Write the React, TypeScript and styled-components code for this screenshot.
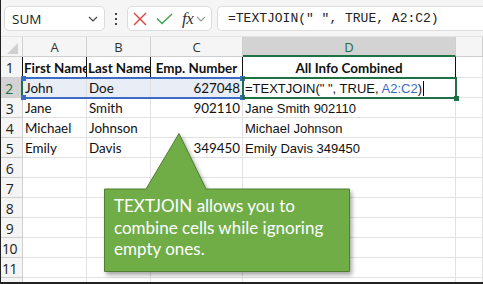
import React from "react";
import styled, { createGlobalStyle } from "styled-components";

const Global = createGlobalStyle`
  html, body { margin: 0; padding: 0; background: #ffffff; overflow: hidden; }
  * { box-sizing: border-box; }
`;

const Frame = styled.div`
  position: relative;
  width: 483px;
  height: 284px;
  overflow: hidden;
  background: #ffffff;
  border-left: 1px solid #222;
  border-bottom: 2px solid #222;
  display: flex;
  flex-direction: column;
`;

const Toolbar = styled.div`
  height: 37px;
  flex: none;
  background: #f5f5f5;
  border-bottom: 1px solid #e2e2e2;
  display: flex;
  align-items: flex-start;
  padding: 6px 0 0 3px;
`;

const BoxBase = styled.div`
  height: 25px;
  background: #ffffff;
  border: 1px solid #dcdcdc;
  border-radius: 5px;
  display: flex;
  align-items: center;
`;

const NameBox = styled(BoxBase)`
  width: 101px;
  padding: 0 6px 0 7px;
  justify-content: space-between;
  font-family: "Open Sans", "Noto Sans", sans-serif;
  font-size: 13.5px;
  color: #222;
`;

const Dots = styled.div`
  width: 22px;
  height: 25px;
  display: flex;
  flex-direction: column;
  align-items: center;
  justify-content: center;
  gap: 3px;
  & > i {
    display: block;
    width: 2px;
    height: 2px;
    background: #444;
  }
`;

const FxBox = styled(BoxBase)`
  width: 85px;
  padding: 0 0 0 5px;
`;

const FxText = styled.span`
  font-family: "Liberation Serif", serif;
  font-style: italic;
  font-size: 17px;
  color: #333;
  margin-left: 9px;
  letter-spacing: -0.5px;
`;

const FormulaInput = styled(BoxBase)`
  margin-left: 5px;
  flex: 1;
  border-right: none;
  border-top-right-radius: 0;
  border-bottom-right-radius: 0;
  padding-left: 10px;
  font-family: "Liberation Mono", monospace;
  font-size: 13px;
  color: #222;
  white-space: pre;
`;

const Sheet = styled.div`
  position: relative;
  flex: 1;
`;

const Grid = styled.div`
  display: grid;
  grid-template-columns: 22px 64px 64px 92px 213px 1fr;
  grid-template-rows: 20px 21px repeat(11, 20px);
`;

const Corner = styled.div`
  background: #f5f5f5;
  border-right: 1px solid #cfcfcf;
  border-bottom: 1px solid #cfcfcf;
  position: relative;
  overflow: hidden;
`;

const ColHead = styled.div<{ $sel?: boolean }>`
  background: ${(p) => (p.$sel ? "#d3d3d3" : "#f5f5f5")};
  border-right: 1px solid #cfcfcf;
  border-bottom: ${(p) => (p.$sel ? "2px solid #1e7145" : "1px solid #cfcfcf")};
  font-family: "Open Sans", "Noto Sans", sans-serif;
  font-size: 13px;
  line-height: 18px;
  padding-top: 1px;
  color: ${(p) => (p.$sel ? "#1e6b45" : "#333")};
  text-align: center;
  overflow: hidden;
`;

const RowHead = styled.div<{ $sel?: boolean }>`
  background: ${(p) => (p.$sel ? "#d3d3d3" : "#f5f5f5")};
  border-right: ${(p) => (p.$sel ? "2px solid #1e7145" : "1px solid #cfcfcf")};
  border-bottom: 1px solid #cfcfcf;
  font-family: "Open Sans", "Noto Sans", sans-serif;
  font-size: 14px;
  line-height: 17px;
  padding-top: 2px;
  padding-right: 4px;
  color: ${(p) => (p.$sel ? "#1e6b45" : "#222")};
  text-align: center;
  overflow: hidden;
  letter-spacing: -0.5px;
`;

const Cell = styled.div<{
  $align?: "left" | "right" | "center";
  $bold?: boolean;
  $arial?: boolean;
  $hl?: boolean;
  $head?: boolean;
}>`
  position: relative;
  background: ${(p) => (p.$hl ? "#e8edf6" : "#ffffff")};
  border-right: 1px solid ${(p) => (p.$head ? "#111" : "#e1e1e1")};
  border-left: ${(p) => (p.$head ? "1px solid #111" : "none")};
  margin-left: ${(p) => (p.$head ? "-1px" : "0")};
  border-bottom: 1px solid #e1e1e1;
  font-family: ${(p) =>
    p.$arial ? '"Liberation Sans", Arial, sans-serif' : 'Lato, "Noto Sans", sans-serif'};
  font-size: ${(p) => (p.$arial ? "13px" : "13.4px")};
  font-weight: ${(p) => (p.$bold ? 700 : 400)};
  line-height: 17px;
  padding: ${(p) => (p.$head ? "3px 1px 0 1px" : "2px 2px 0 2px")};
  text-align: ${(p) => p.$align || "left"};
  white-space: nowrap;
  overflow: hidden;
  color: #111;
`;

const Ref = styled.span`
  color: #3a6cc6;
`;

const Caret = styled.span`
  display: inline-block;
  width: 1px;
  height: 15px;
  background: #000;
  vertical-align: -3px;
  margin-left: 1px;
`;

const RangeBox = styled.div`
  position: absolute;
  left: 21px;
  top: 40px;
  width: 222px;
  height: 22px;
  border: 2px solid #3a6cc6;
  border-left-color: transparent;
  pointer-events: none;
`;

const Handle = styled.i<{ $c: string; $x: string; $y: string }>`
  position: absolute;
  width: 5px;
  height: 5px;
  background: ${(p) => p.$c};
  ${(p) => p.$x};
  ${(p) => p.$y};
`;

const ActiveBox = styled.div`
  position: absolute;
  left: 241px;
  top: 40px;
  width: 215px;
  height: 22px;
  border: 2px solid #1e7145;
  pointer-events: none;
`;

const Callout = styled.div`
  position: absolute;
  left: 103px;
  top: 133px;
  width: 252px;
  height: 146px;
  pointer-events: none;
`;

const CalloutShape = styled.svg`
  position: absolute;
  left: 0;
  top: 0;
  filter: drop-shadow(2px 3px 2px rgba(0, 0, 0, 0.35));
`;

const CalloutText = styled.div`
  position: relative;
  padding: 62px 0 0 10px;
  font-family: Lato, "Noto Sans", sans-serif;
  font-size: 17px;
  line-height: 21.7px;
  color: #ffffff;
`;

const colHeads = ["A", "B", "C", "D", ""];

type Row = {
  n: number;
  a?: string;
  b?: string;
  c?: string;
  d?: React.ReactNode;
};

const rows: Row[] = [
  { n: 2, a: "John", b: "Doe", c: "627048" },
  { n: 3, a: "Jane", b: "Smith", c: "902110", d: "Jane Smith 902110" },
  { n: 4, a: "Michael", b: "Johnson", d: "Michael Johnson" },
  { n: 5, a: "Emily", b: "Davis", c: "349450", d: "Emily Davis 349450" },
  { n: 6 },
  { n: 7 },
  { n: 8 },
  { n: 9 },
  { n: 10 },
  { n: 11 },
  { n: 12 },
];

export default function App() {
  return (
    <>
      <Global />
      <Frame>
        <Toolbar>
          <NameBox>
            <span>SUM</span>
            <svg width="10" height="6" viewBox="0 0 10 6">
              <polyline points="1,1 5,5 9,1" fill="none" stroke="#444" strokeWidth="1.2" />
            </svg>
          </NameBox>
          <Dots>
            <i />
            <i />
            <i />
          </Dots>
          <FxBox>
            <svg width="14" height="14" viewBox="0 0 14 14">
              <line x1="1" y1="1" x2="13" y2="13" stroke="#e0443e" strokeWidth="1.4" />
              <line x1="13" y1="1" x2="1" y2="13" stroke="#e0443e" strokeWidth="1.4" />
            </svg>
            <svg width="17" height="12" viewBox="0 0 17 12" style={{ marginLeft: 9 }}>
              <polyline points="1,5.5 6,10.5 16,1" fill="none" stroke="#3fa34d" strokeWidth="1.4" />
            </svg>
            <FxText>fx</FxText>
            <svg width="10" height="6" viewBox="0 0 10 6" style={{ marginLeft: 3 }}>
              <polyline points="1,1 5,5 9,1" fill="none" stroke="#999" strokeWidth="1.1" />
            </svg>
          </FxBox>
          <FormulaInput>=TEXTJOIN(" ", TRUE, A2:C2)</FormulaInput>
        </Toolbar>
        <Sheet>
          <Grid>
            <Corner>
              <svg width="22" height="20" viewBox="0 0 22 20" style={{ position: "absolute", left: 0, top: 0 }}>
                <polygon points="17,6 17,17 6,17" fill="#d0d0d0" />
              </svg>
            </Corner>
            {colHeads.map((h, i) => (
              <ColHead key={i} $sel={h === "D"}>
                {h}
              </ColHead>
            ))}
            <RowHead>1</RowHead>
            <Cell $bold $head>First Name</Cell>
            <Cell $bold $head>Last Name</Cell>
            <Cell $bold $head $align="center">Emp. Number</Cell>
            <Cell $bold $head $align="center">All Info Combined</Cell>
            <Cell />
            {rows.map((r) => (
              <React.Fragment key={r.n}>
                <RowHead $sel={r.n === 2}>{r.n < 12 ? r.n : ""}</RowHead>
                <Cell $hl={r.n === 2}>{r.a}</Cell>
                <Cell $hl={r.n === 2}>{r.b}</Cell>
                <Cell $hl={r.n === 2} $align="right">{r.c}</Cell>
                <Cell $arial>
                  {r.n === 2 ? (
                    <>
                      =TEXTJOIN(" ", TRUE, <Ref>A2:C2</Ref>)<Caret />
                    </>
                  ) : (
                    r.d
                  )}
                </Cell>
                <Cell />
              </React.Fragment>
            ))}
          </Grid>
          <RangeBox>
            <Handle $c="#3a6cc6" $x="left: -3px" $y="top: -3px" />
            <Handle $c="#3a6cc6" $x="right: -3px" $y="top: -3px" />
            <Handle $c="#3a6cc6" $x="left: -3px" $y="bottom: -3px" />
            <Handle $c="#3a6cc6" $x="right: -3px" $y="bottom: -3px" />
          </RangeBox>
          <ActiveBox>
            <Handle $c="#1e7145" $x="right: -4px" $y="bottom: -4px" />
          </ActiveBox>
        </Sheet>
        <Callout>
          <CalloutShape width="252" height="146" viewBox="0 0 252 146">
            <polygon
              points="0.5,56 42,56 75,0.5 102,56 245.5,56 245.5,138.5 0.5,138.5"
              fill="#70ad47"
              stroke="#507e32"
              strokeWidth="1"
            />
          </CalloutShape>
          <CalloutText>
            TEXTJOIN allows you to
            <br />
            combine cells while ignoring
            <br />
            empty ones.
          </CalloutText>
        </Callout>
      </Frame>
    </>
  );
}
